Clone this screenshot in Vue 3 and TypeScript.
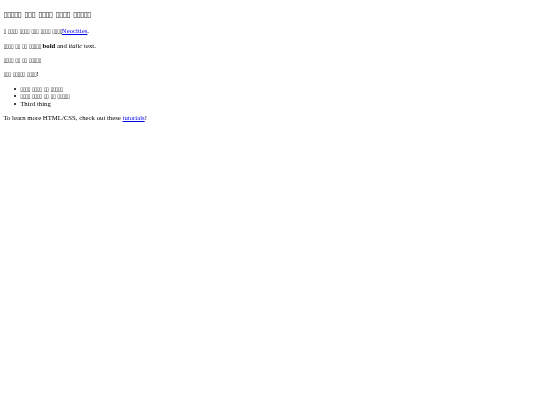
<script setup lang="ts">
const title: string = '▯▯▯▯▯ ▯▯▯ ▯▯▯▯ ▯▯▯▯ ▯▯▯▯▯'
</script>

<template>
  <main class="page">
    <h1 class="title"><span class="tofu big">{{ title }}</span></h1>
    <p><span class="tofu">▯ ▯▯▯▯ ▯▯▯▯ ▯▯▯ ▯▯▯▯ ▯▯▯▯</span><a href="#">Neocities</a>.</p>
    <p><span class="tofu">▯▯▯▯ ▯▯ ▯▯ ▯▯▯▯▯</span> <b>bold</b> and <i>italic</i> text.</p>
    <p><span class="tofu">▯▯▯▯ ▯▯ ▯▯ ▯▯▯▯▯</span></p>
    <p><span class="tofu">▯▯▯ ▯▯▯▯▯ ▯▯▯▯</span>!</p>
    <ul>
      <li><span class="tofu">▯▯▯▯ ▯▯▯▯ ▯▯ ▯▯▯▯▯</span></li>
      <li><span class="tofu">▯▯▯▯ ▯▯▯▯ ▯▯ ▯▯ ▯▯▯▯▯</span></li>
      <li>Third thing</li>
    </ul>
    <p>To learn more HTML/CSS, check out these <a href="#">tutorials</a>!</p>
  </main>
</template>

<style scoped>
.page {
  zoom: 0.421875;
  margin: 0 8px;
  font-family: "Liberation Serif", serif;
  font-size: 16px;
  line-height: 18px;
  color: #000;
  filter: blur(0.45px);
}
.title {
  font-size: 26px;
  line-height: 30px;
  margin: 17.4px 0;
}
p {
  margin: 16px 0;
}
ul {
  margin: 16px 0;
  padding-left: 40px;
  list-style: none;
}
li {
  position: relative;
}
li::before {
  content: "";
  position: absolute;
  left: -15px;
  top: 7px;
  width: 5px;
  height: 5px;
  border-radius: 50%;
  background: #000;
}
.tofu {
  font-family: "DejaVu Sans", sans-serif;
  font-weight: normal;
  font-size: 0.8em;
  line-height: 0;
  letter-spacing: -0.1em;
  word-spacing: 0.15em;
  color: #333;
}
.tofu.big {
  font-size: 0.72em;
  word-spacing: 0.19em;
}
a {
  color: #00e;
}
</style>
